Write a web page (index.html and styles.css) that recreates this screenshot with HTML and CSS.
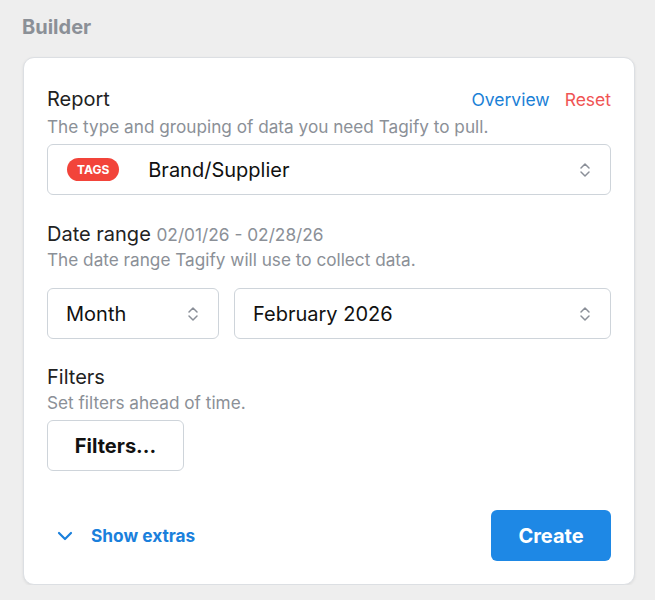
FILE: index.html
```html
<!DOCTYPE html>
<html>
<head>
<meta charset="utf-8">
<link rel="stylesheet" href="styles.css">
</head>
<body>
<div class="page">
  <h2 class="title">Builder</h2>
  <div class="card">
    <section class="section section-report">
      <div class="label-row">
        <span class="label">Report</span>
        <span class="links"><a class="link-blue">Overview</a><a class="link-red">Reset</a></span>
      </div>
      <div class="desc">The type and grouping of data you need Tagify to pull.</div>
      <div class="select select-report">
        <span class="badge">TAGS</span>
        <span class="value">Brand/Supplier</span>
        <svg class="chev" width="12" height="18" viewBox="0 0 12 18"><path d="M2 7 L6 3 L10 7 M2 11 L6 15 L10 11" fill="none" stroke="#8a8f98" stroke-width="1.5" stroke-linecap="round" stroke-linejoin="round"/></svg>
      </div>
    </section>
    <section class="section section-date">
      <div class="label-row">
        <span class="label">Date range <span class="sub">02/01/26 - 02/28/26</span></span>
      </div>
      <div class="desc">The date range Tagify will use to collect data.</div>
      <div class="date-row">
        <div class="select select-month">
          <span class="value">Month</span>
          <svg class="chev" width="12" height="18" viewBox="0 0 12 18"><path d="M2 7 L6 3 L10 7 M2 11 L6 15 L10 11" fill="none" stroke="#8a8f98" stroke-width="1.5" stroke-linecap="round" stroke-linejoin="round"/></svg>
        </div>
        <div class="select select-period">
          <span class="value">February 2026</span>
          <svg class="chev" width="12" height="18" viewBox="0 0 12 18"><path d="M2 7 L6 3 L10 7 M2 11 L6 15 L10 11" fill="none" stroke="#8a8f98" stroke-width="1.5" stroke-linecap="round" stroke-linejoin="round"/></svg>
        </div>
      </div>
    </section>
    <section class="section section-filters">
      <div class="label-row"><span class="label">Filters</span></div>
      <div class="desc">Set filters ahead of time.</div>
      <button class="btn-filters">Filters...</button>
    </section>
    <div class="footer">
      <a class="extras">
        <svg width="18" height="18" viewBox="0 0 18 18"><path d="M3 6 L9 12 L15 6" fill="none" stroke="#1a80dc" stroke-width="2.2" stroke-linecap="round" stroke-linejoin="round"/></svg>
        <span>Show extras</span>
      </a>
      <button class="btn-create">Create</button>
    </div>
  </div>
</div>
</body>
</html>
```
FILE: styles.css
```css
* { box-sizing: border-box; }
html, body { margin: 0; padding: 0; }
body {
  background: #eeeeee;
  font-family: Inter, "Noto Sans", sans-serif;
  color: #1f2124;
}
.page { padding: 14px 21px 0 22px; }
.title {
  margin: 0 0 17px 0;
  font-size: 20px;
  font-weight: 700;
  color: #8b9097;
  line-height: 26px;
}
.card {
  background: #fff;
  border: 1px solid #dcdfe3;
  border-radius: 11px;
  box-shadow: 0 1px 3px rgba(0,0,0,0.08);
  padding: 27px 23px 23px 23px;
  width: 612px;
  margin-left: 1px;
}
.label-row {
  display: flex;
  justify-content: space-between;
  align-items: baseline;
  line-height: 28px;
}
.label { font-size: 20px; color: #222; }
.sub { font-size: 17.3px; color: #8b9097; }
.links { font-size: 17.5px; display: flex; gap: 15px; }
.link-blue { color: #1a80d6; }
.link-red { color: #f05454; }
.desc {
  font-size: 17.2px;
  color: #8b9097;
  line-height: 22px;
}
.section-report .desc { margin-top: 2px; margin-bottom: 6px; }
.section-date { margin-top: 25px; }
.section-date .desc { margin-bottom: 17px; }
.section-filters { margin-top: 24px; }
.section-filters .desc { margin-top: 1px; margin-bottom: 6px; }
.select {
  display: flex;
  align-items: center;
  height: 51px;
  border: 1px solid #ced4da;
  border-radius: 6px;
  padding: 0 19px 0 18px;
  font-size: 20px;
  color: #111;
}
.select .value { flex: 1; }
.select-report { padding-left: 19px; }
.badge {
  background: #f2443a;
  color: #fff;
  font-size: 12px;
  font-weight: 700;
  border-radius: 12px;
  height: 23px;
  line-height: 23px;
  padding: 0 10px;
  margin-right: 29px;
}
.chev { display: block; }
.date-row { display: flex; gap: 15px; }
.select-month { width: 172px; }
.select-period { flex: 1; }
.btn-filters {
  height: 51px;
  width: 137px;
  background: #fff;
  border: 1px solid #ced4da;
  border-radius: 6px;
  font-family: inherit;
  font-size: 20px;
  font-weight: 700;
  color: #111;
  padding: 0;
}
.footer {
  display: flex;
  justify-content: space-between;
  align-items: center;
  margin-top: 39px;
}
.extras {
  display: flex;
  align-items: center;
  gap: 17px;
  color: #1a80dc;
  font-size: 17.3px;
  font-weight: 700;
  padding-left: 9px;
}
.extras svg { display: block; }
.btn-create {
  height: 51px;
  width: 120px;
  background: #1e88e5;
  color: #fff;
  border: none;
  border-radius: 6px;
  font-family: inherit;
  font-size: 20px;
  font-weight: 700;
}
```
